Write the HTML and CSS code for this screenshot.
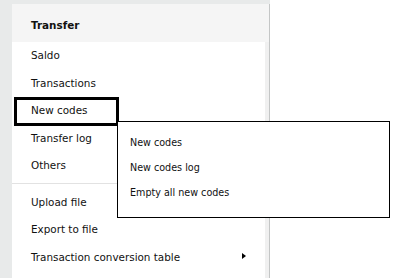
FILE: index.html
```html
<!DOCTYPE html>
<html lang="en">
<head>
    <meta charset="UTF-8">
    <meta name="viewport" content="width=device-width, initial-scale=1.0">
    <title>Transfer menu</title>
    <link rel="stylesheet" href="styles.css">
</head>
<body>
    <div class="frame">
        <div class="menu">
            <div class="menu-header">Transfer</div>
            <ul class="menu-list">
                <li class="menu-item">Saldo</li>
                <li class="menu-item">Transactions</li>
                <li class="menu-item focused">New codes</li>
                <li class="menu-item">Transfer log</li>
                <li class="menu-item">Others</li>
                <li class="divider"></li>
                <li class="menu-item">Upload file</li>
                <li class="menu-item">Export to file</li>
                <li class="menu-item has-sub">Transaction conversion table <span class="arrow"></span></li>
            </ul>
        </div>
    </div>

    <ul class="submenu">
        <li class="submenu-item">New codes</li>
        <li class="submenu-item">New codes log</li>
        <li class="submenu-item">Empty all new codes</li>
    </ul>
</body>
</html>
```

FILE: styles.css
```css
body {
    font-family: "DejaVu Sans", Verdana, sans-serif;
    font-size: 10.4px;
    color: #111;
    margin: 0;
    padding: 0;
    background-color: #fff;
}
.frame {
    width: 270px;
    height: 278px;
    box-sizing: border-box;
    padding: 4px 0 0 12px;
    background-color: #e8eaea;
}
.menu {
    height: 100%;
    display: flex;
    flex-direction: column;
    background-color: #fff;
    border-right: 1px solid #c4c6c6;
}
.menu-header {
    height: 38px;
    box-sizing: border-box;
    padding: 15px 19px 0;
    font-weight: bold;
    background-color: #f5f5f5;
}
.menu-list {
    flex: 1;
    list-style: none;
    margin: 0;
    padding: 0;
    border-right: 4px solid #f0f0f0;
}
.menu-item {
    position: relative;
    height: 27.5px;
    line-height: 27.5px;
    padding: 0 19px;
    white-space: nowrap;
}
/* keyboard focus frame drawn over the item */
.focused::after {
    content: "";
    position: absolute;
    left: 2px;
    top: 0;
    width: 105px;
    height: 29px;
    box-sizing: border-box;
    border: 3px solid #000;
}
.divider {
    height: 1px;
    margin: 3px 0 5px;
    background-color: #e2e2e2;
}
.has-sub {
    display: flex;
    align-items: center;
    justify-content: space-between;
}
.arrow {
    width: 0;
    height: 0;
    margin-bottom: 2px;
    border-left: 4px solid #000;
    border-top: 3.5px solid transparent;
    border-bottom: 3.5px solid transparent;
}
.submenu {
    position: absolute;
    left: 117px;
    top: 121px;
    width: 273px;
    height: 97px;
    box-sizing: border-box;
    margin: 0;
    padding: 8px 12px 0;
    list-style: none;
    font-size: 9.6px;
    background-color: #fff;
    border: 1px solid #000;
}
.submenu-item {
    height: 25px;
    line-height: 25px;
    white-space: nowrap;
}
```
